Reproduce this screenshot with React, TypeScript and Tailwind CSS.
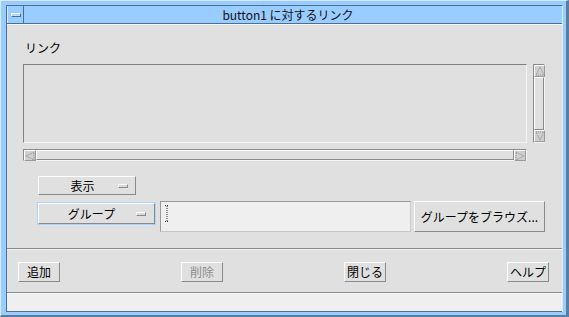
import React from "react";

const font = { fontFamily: '"Noto Sans CJK JP", "DejaVu Sans", sans-serif' };

// 3D raised button like Motif
const Btn: React.FC<{ label: string; className?: string; disabled?: boolean }> = ({
  label,
  className = "",
  disabled,
}) => (
  <div
    className={`flex items-center justify-center bg-[#e0e0e0] border border-t-white border-l-white border-r-[#8a8a8a] border-b-[#8a8a8a] text-[12px] leading-none ${
      disabled ? "text-[#8e8e8e]" : "text-black"
    } ${className}`}
  >
    {label}
  </div>
);

const OptionBtn: React.FC<{ label: string; className?: string; focus?: boolean }> = ({
  label,
  className = "",
  focus,
}) => (
  <div className={`${focus ? "border border-[#a8d4ff]" : ""}`}>
    <div
      className={`flex items-center bg-[#e0e0e0] border border-t-white border-l-white border-r-[#8a8a8a] border-b-[#8a8a8a] text-[12px] leading-none ${className}`}
    >
      <span className="flex-1 text-center">{label}</span>
      <span className="w-[10px] h-[4px] border border-t-white border-l-white border-r-[#8a8a8a] border-b-[#8a8a8a] bg-[#d8d8d8]" />
    </div>
  </div>
);

const Arrow: React.FC<{ dir: "up" | "down" | "left" | "right"; className?: string }> = ({ dir, className = "" }) => {
  const pts =
    dir === "up"
      ? "6,2 10,10 2,10"
      : dir === "down"
      ? "2,2 10,2 6,10"
      : dir === "left"
      ? "2,6 10,2 10,10"
      : "2,2 10,6 2,10";
  return (
    <div className={`w-[12px] h-[12px] bg-[#cfcfcf] border border-t-white border-l-white border-r-[#9a9a9a] border-b-[#9a9a9a] ${className}`}>
      <svg width="10" height="10" viewBox="1 1 10 10">
        <polygon points={pts} fill="none" stroke="#8a8a8a" strokeWidth="1" strokeDasharray="1 1" />
      </svg>
    </div>
  );
};

const App: React.FC = () => {
  return (
    <div
      style={font}
      className="w-[569px] h-[317px] bg-[#99ccff] border-l border-t border-l-[#d6ebff] border-t-[#d6ebff] border-r-[3px] border-b-[2px] border-r-[#5b7d9e] border-b-[#5b7d9e] pl-[5px] pt-[4px] pr-[3px] pb-[3px] overflow-hidden"
    >
      <div className="h-full flex flex-col border-l border-t border-[#4d6e8e] border-r border-r-[#d6ebff]">
        {/* title bar */}
        <div className="h-[18px] flex border-b border-[#4d6e8e] bg-[#99ccff]">
          <div className="w-[17px] flex items-center justify-center border-r border-[#4d6e8e] border-l border-l-[#d6ebff]">
            <div className="w-[10px] h-[4px] bg-[#bcdcff] border border-[#4d6e8e] border-t-white border-l-white" />
          </div>
          <div className="flex-1 flex items-center justify-center text-[12px] text-[#111] pr-[10px]">
            button1 に対するリンク
          </div>
        </div>

        {/* main */}
        <div className="flex-1 bg-[#e0e0e0] flex flex-col border-t border-t-[#f4f4f4]">
          <div className="pl-[16px] pr-[17px]">
            <div className="mt-[16px] ml-[2px] h-[14px] leading-[14px] text-[12px] text-black">リンク</div>
            <div className="mt-[9px] flex gap-[6px]">
              <div className="w-[504px] h-[79px] border border-t-[#808080] border-l-[#808080] border-r-[#f4f4f4] border-b-[#f4f4f4] bg-[#e0e0e0]" />
              <div className="w-[12px] h-[79px] flex flex-col border-l border-t border-[#8a8a8a] border-r border-r-[#f4f4f4] border-b border-b-[#f4f4f4]">
                <Arrow dir="up" className="w-[11px]! h-[12px]" />
                <div className="flex-1 bg-[#e0e0e0] border border-t-white border-l-white border-r-[#8a8a8a] border-b-[#8a8a8a]" />
                <Arrow dir="down" className="w-[11px]! h-[12px]" />
              </div>
            </div>
            <div className="mt-[6px] w-[504px] h-[12px] flex border-l border-t border-[#8a8a8a] border-r border-r-[#f4f4f4] border-b border-b-[#f4f4f4]">
              <Arrow dir="left" className="h-[11px]!" />
              <div className="flex-1 bg-[#e0e0e0] border border-t-white border-l-white border-r-[#8a8a8a] border-b-[#8a8a8a]" />
              <Arrow dir="right" className="h-[11px]!" />
            </div>

            <div className="mt-[15px] ml-[15px] w-[98px]">
              <OptionBtn label="表示" className="h-[19px] pl-[8px] pr-[7px]" />
            </div>

            <div className="mt-[6px] flex items-start">
              <div className="ml-[14px] mt-[1px] w-[119px]">
                <OptionBtn label="グループ" focus className="h-[21px] pl-[8px] pr-[8px]" />
              </div>
              <div className="ml-[4px] w-[251px] h-[31px] bg-[#efefef] border border-t-[#9a9a9a] border-l-[#9a9a9a] border-r-[#c8c8c8] border-b-[#c8c8c8] pl-[4px] pt-[3px]">
                <svg width="5" height="17" viewBox="0 0 5 17">
                  <path d="M0 0.5h4M0 16.5h4M2 1v15" stroke="#333" strokeWidth="1" strokeDasharray="1 1" fill="none" />
                </svg>
              </div>
              <Btn label="グループをブラウズ..." className="ml-[3px] w-[131px] h-[31px]" />
            </div>
          </div>

          <div className="mt-[16px] border-t border-t-[#8a8a8a] border-b border-b-[#f4f4f4]" />

          <div className="mt-[12px] pl-[11px] pr-[13px] flex justify-between">
            <Btn label="追加" className="w-[42px] h-[20px]" />
            <Btn label="削除" disabled className="w-[42px] h-[20px]" />
            <Btn label="閉じる" className="w-[42px] h-[20px]" />
            <Btn label="ヘルプ" className="w-[42px] h-[20px]" />
          </div>
          <div className="flex-1" />
        </div>

        {/* status area */}
        <div className="h-[20px] border-t border-t-[#8a8a8a] bg-[#efefef] border-b border-b-[#4d6e8e]">
          <div className="h-full border-t border-t-[#f8f8f8]" />
        </div>
      </div>
    </div>
  );
};

export default App;
